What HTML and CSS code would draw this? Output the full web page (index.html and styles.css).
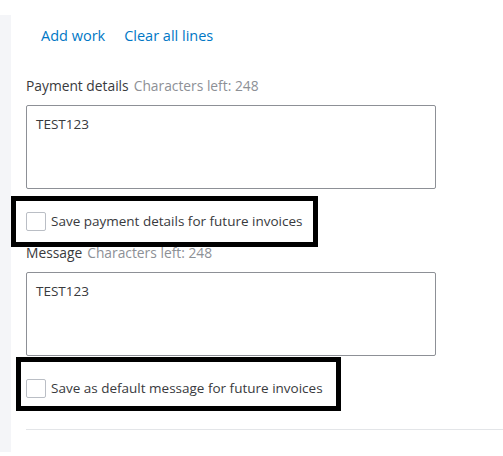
FILE: index.html
```html
<!DOCTYPE html>
<html>
<head>
<meta charset="utf-8">
<link rel="stylesheet" href="styles.css">
</head>
<body>
<div class="page">
  <div class="rail"></div>
  <div class="main">
    <div class="links">
      <a class="link">Add work</a>
      <a class="link">Clear all lines</a>
    </div>
    <div class="field first">
      <div class="label"><span class="name">Payment details</span><span class="hint">Characters left: 248</span></div>
      <div class="textarea">TEST123</div>
      <div class="check-row">
        <span class="box"></span><span class="check-text">Save payment details for future invoices</span>
        <span class="annot annot-1"></span>
      </div>
    </div>
    <div class="field">
      <div class="label"><span class="name">Message</span><span class="hint">Characters left: 248</span></div>
      <div class="textarea">TEST123</div>
      <div class="check-row">
        <span class="box"></span><span class="check-text">Save as default message for future invoices</span>
        <span class="annot annot-2"></span>
      </div>
    </div>
    <div class="divider"></div>
  </div>
</div>
</body>
</html>
```
FILE: styles.css
```css
html, body {
  margin: 0;
  padding: 0;
  background: #fff;
}
body {
  font-family: "Open Sans", "Liberation Sans", sans-serif;
  color: #393a3d;
  width: 503px;
  height: 456px;
  overflow: hidden;
}
.page {
  display: flex;
  padding-top: 15px;
}
.rail {
  width: 11px;
  height: 437px;
  background: #f4f5f8;
  flex: none;
}
.main {
  flex: 1;
  padding-left: 15px;
}
.links {
  display: flex;
  gap: 19px;
  padding-left: 15px;
  padding-top: 11px;
  height: 20px;
}
.link {
  color: #0077c5;
  font-size: 14.5px;
  line-height: 20px;
}
.field.first {
  margin-top: 31px;
}
.label {
  font-size: 13.8px;
  line-height: 18px;
  height: 18px;
}
.name {
  color: #393a3d;
  margin-right: 5px;
}
.hint {
  color: #8d9096;
}
.textarea {
  margin-top: 10px;
  width: 410px;
  height: 84px;
  box-sizing: border-box;
  border: 1px solid #8d9096;
  border-radius: 2px;
  padding: 9px 9px;
  font-size: 13.5px;
  line-height: 18px;
}
.check-row {
  position: relative;
  display: flex;
  align-items: center;
  gap: 5px;
  height: 20px;
  margin-top: 22px;
  margin-bottom: 13px;
  width: 410px;
}
.box {
  width: 20px;
  height: 19px;
  box-sizing: border-box;
  border: 1px solid #babec5;
  border-radius: 2px;
  flex: none;
}
.check-text {
  font-size: 13.5px;
  line-height: 20px;
  color: #393a3d;
}
.annot {
  position: absolute;
  border: 5px solid #000;
  box-sizing: border-box;
}
.annot-1 {
  left: -15px;
  top: -15px;
  width: 307px;
  height: 51px;
}
.annot-2 {
  left: -10px;
  top: -21px;
  width: 325px;
  height: 54px;
}
.divider {
  height: 1px;
  background: #e3e5e8;
  margin-top: 31px;
}
```
